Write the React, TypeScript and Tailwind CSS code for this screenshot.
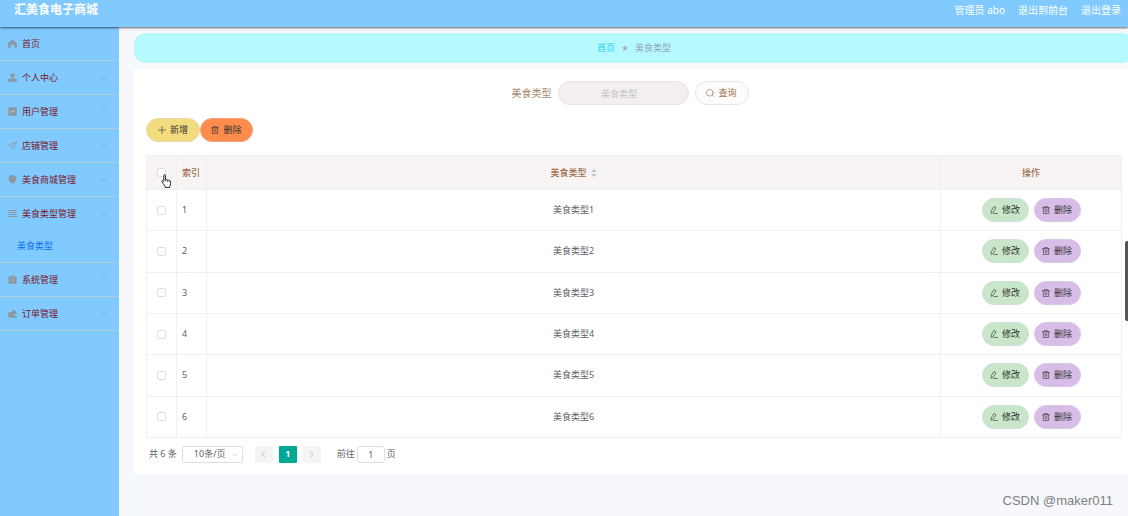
import type { ReactNode } from "react";

type IconProps = { className?: string };

function Filled({ children }: { children: ReactNode }) {
  return (
    <svg viewBox="0 0 18 18" fill="currentColor" className="size-[9px]" aria-hidden="true">
      {children}
    </svg>
  );
}

function Outline({ children, className = "size-2" }: { children: ReactNode; className?: string }) {
  return (
    <svg
      viewBox="0 0 18 18"
      fill="none"
      stroke="currentColor"
      strokeWidth="1.4"
      strokeLinecap="round"
      strokeLinejoin="round"
      className={className}
      aria-hidden="true"
    >
      {children}
    </svg>
  );
}

const HomeIcon = () => (
  <Filled>
    <path d="M9 1 16.800 7.500c.6.5.9 1 .9 1.600V16c0 .8-.6 1.500-1.300 1.500h-3.900V12c0-.7-.5-1.200-1.200-1.200H6.700c-.7 0-1.200.5-1.200 1.200v5.500h-4c-.7 0-1.300-.7-1.300-1.500V9.100c0-.6.3-1.100.9-1.600z" />
  </Filled>
);
const UserIcon = () => (
  <Filled>
    <circle cx="9" cy="5" r="4.700" />
    <path d="M.3 17.500v-3c0-2 1.500-3.500 3.500-3.500h10.400c2 0 3.500 1.500 3.500 3.500v3z" />
  </Filled>
);
const MarketingIcon = () => (
  <Filled>
    <rect x="0.500" y="0.500" width="17" height="17" rx="1.500" />
    <path d="M4 11 7.500 8l2.500 2L14 6" fill="none" stroke="#c3d3df" strokeWidth="1.500" />
  </Filled>
);
const PositionIcon = () => (
  <Outline className="size-[9px]">
    <path d="M17 1 1 7.500l6.500 3 3 6.500zM7.500 10.500 17 1" />
  </Outline>
);
const PinIcon = () => (
  <Filled>
    <path d="M9 0c4.600 0 8 3.300 8 7.600 0 3.900-3.500 7.400-8 10.400C4.500 15 1 11.500 1 7.600 1 3.300 4.400 0 9 0z" />
  </Filled>
);
const RowsIcon = () => (
  <Filled>
    <path d="M.5 2h17v2H.5zM.5 6h17v2H.5zM.5 10h17v2H.5zM.5 14h17v2H.5z" />
  </Filled>
);
const ClipboardIcon = () => (
  <Filled>
    <path d="M2 2.500H6V.5h6v2h4c.6 0 1 .4 1 1v13c0 .6-.4 1-1 1H2c-.6 0-1-.4-1-1v-13c0-.6.4-1 1-1z" />
    <path d="M6.500 8.500l5 5M11.500 8.500l-5 5M5.500 4.800h7" stroke="#a9c4d8" strokeWidth="1.200" fill="none" />
  </Filled>
);
const WalletIcon = () => (
  <Filled>
    <path d="M1.500 6.500H6L11.500 1l4 4v1.500h1c.5 0 1 .4 1 1V10h-4c-1 0-1.700.8-1.700 1.800s.7 1.700 1.700 1.700h4v3c0 .6-.5 1-1 1h-15c-.6 0-1-.4-1-1v-9c0-.6.4-1 1-1z" />
  </Filled>
);
const PlusIcon = () => (
  <Outline>
    <path d="M9 1v16M1 9h16" />
  </Outline>
);
const TrashIcon = () => (
  <Outline>
    <path d="M1 4h16M6 4V1h6v3M3 4v13h12V4M7.200 7.500v6M10.800 7.500v6" />
  </Outline>
);
const EditIcon = () => (
  <Outline>
    <path d="M9.500 1.500 13.500 4 7 14 2.500 16.500 3 11.500zM8 16.800h9" />
  </Outline>
);
const SearchIcon = () => (
  <Outline>
    <circle cx="8.500" cy="8.500" r="7.500" />
    <path d="M14 14 16.500 16.500" />
  </Outline>
);
const ChevronIcon = ({ className }: IconProps) => (
  <svg viewBox="0 0 12 8" fill="none" stroke="currentColor" strokeWidth="1.500" className={className} aria-hidden="true">
    <path d="M1 1.500 6 6.500 11 1.500" />
  </svg>
);

type MenuItem = { label: string; icon: ReactNode; expandable?: boolean; children?: string[] };

const menu: MenuItem[] = [
  { label: "首页", icon: <HomeIcon /> },
  { label: "个人中心", icon: <UserIcon />, expandable: true },
  { label: "用户管理", icon: <MarketingIcon />, expandable: true },
  { label: "店铺管理", icon: <PositionIcon />, expandable: true },
  { label: "美食商城管理", icon: <PinIcon />, expandable: true },
  { label: "美食类型管理", icon: <RowsIcon />, expandable: true, children: ["美食类型"] },
  { label: "系统管理", icon: <ClipboardIcon />, expandable: true },
  { label: "订单管理", icon: <WalletIcon />, expandable: true },
];

const rows = [1, 2, 3, 4, 5, 6];

const checkbox =
  "block mx-auto size-[9px] appearance-none rounded-[2px] border border-[#dcdfe6] bg-white checked:bg-[#00a896]";
const pill = "flex h-6 items-center justify-center gap-1 rounded-full border";

function Sidebar() {
  return (
    <nav className="w-[119px] shrink-0 bg-[#80caff]">
      <ul>
        {menu.map((item) => (
          <li key={item.label} className="border-b border-[#b2cde0]">
            <a href="#" className="flex h-[33px] items-center pr-3 pl-2 text-[#7c1427]">
              <span className="text-[#8c98a2]">{item.icon}</span>
              <span className="ml-[5px] grow">{item.label}</span>
              {item.expandable && (
                <ChevronIcon
                  className={item.children ? "h-1 w-1.5 rotate-180 text-[#7aa3c0]" : "h-1 w-1.5 text-[#7aa3c0]"}
                />
              )}
            </a>
            {item.children?.map((child) => (
              <a key={child} href="#" className="flex h-8 items-center pl-[17px] text-[#0b6cf0]">
                {child}
              </a>
            ))}
          </li>
        ))}
      </ul>
    </nav>
  );
}

function Pagination() {
  return (
    <div className="mt-[7px] flex h-[18px] items-center pl-[3px] text-[#606266]">
      <span>共 6 条</span>
      <div className="relative ml-[5px]">
        <select
          aria-label="每页条数"
          className="block h-[17px] w-[61px] appearance-none rounded-[2px] border border-[#dcdfe6] bg-white pl-[11px]"
        >
          <option>10条/页</option>
        </select>
        <ChevronIcon className="pointer-events-none absolute top-[7px] right-[5px] h-1 w-1.5 text-[#c0c4cc]" />
      </div>
      <div className="ml-3 flex gap-1.5">
        <button aria-label="上一页" className="flex h-[17px] w-[18px] items-center justify-center rounded-[1px] bg-[#f4f4f5] text-[#b4b8c0]">
          <ChevronIcon className="h-[5px] w-[7px] rotate-90" />
        </button>
        <button className="h-[17px] w-[18px] rounded-[1px] bg-[#00a896] font-bold text-white">1</button>
        <button aria-label="下一页" className="flex h-[17px] w-[18px] items-center justify-center rounded-[1px] bg-[#f4f4f5] text-[#b4b8c0]">
          <ChevronIcon className="h-[5px] w-[7px] -rotate-90" />
        </button>
      </div>
      <label className="ml-4 flex items-center gap-[2px]">
        前往
        <input
          defaultValue="1"
          className="h-[17px] w-7 rounded-[3px] border border-[#dcdfe6] text-center"
        />
        页
      </label>
    </div>
  );
}

function TypeTable() {
  return (
    <table className="mt-[13px] h-[283px] w-full table-fixed border-collapse border border-[#eef0f5] text-[#606266] [&_td]:border [&_td]:border-[#eef0f5] [&_th]:border [&_th]:border-[#eef0f5]">
      <colgroup>
        <col className="w-[30px]" />
        <col className="w-[30px]" />
        <col />
        <col className="w-[181px]" />
      </colgroup>
      <thead>
        <tr className="h-[34px] bg-[#f8f4f3] text-[#a0704f]">
          <th>
            <input type="checkbox" aria-label="全选" className={checkbox} />
          </th>
          <th className="pl-[5px] text-left font-medium">索引</th>
          <th className="font-medium">
            <span className="flex items-center justify-center gap-1">
              美食类型
              <svg viewBox="0 0 6 8" className="h-2 w-1.5" fill="#b9bfcb" aria-hidden="true">
                <path d="M3 0 5.800 3H.2zM3 8 .2 5h5.600z" />
              </svg>
            </span>
          </th>
          <th className="font-medium">操作</th>
        </tr>
      </thead>
      <tbody>
        {rows.map((n) => (
          <tr key={n}>
            <td>
              <input type="checkbox" aria-label={`选择第${n}行`} className={checkbox} />
            </td>
            <td className="pl-[5px]">{n}</td>
            <td className="text-center">美食类型{n}</td>
            <td>
              <div className="flex justify-center gap-[5px]">
                <button className={`${pill} w-[47px] border-[#cfe0d6] bg-[#c8e6c9] text-[#333333]`}>
                  <EditIcon />
                  修改
                </button>
                <button className={`${pill} w-[47px] border-[#d8c8e6] bg-[#d7bde8] text-[#333333]`}>
                  <TrashIcon />
                  删除
                </button>
              </div>
            </td>
          </tr>
        ))}
      </tbody>
    </table>
  );
}

export default function App() {
  return (
    <div className="relative flex min-h-screen flex-col overflow-hidden bg-[#f6f8fb] font-['Noto_Sans','Noto_Sans_CJK_SC',sans-serif] text-[9px] leading-3">
      <header className="z-10 flex h-[27px] items-center bg-[#80caff] pr-[7px] pb-2 pl-3.5 text-[10px] text-white shadow-[0_1px_2px_rgba(0,0,0,0.6)]">
        <h1 className="grow text-[12px] font-bold">汇美食电子商城</h1>
        <div className="flex gap-[13px]">
          <span>管理员 abo</span>
          <a href="#">退出到前台</a>
          <a href="#">退出登录</a>
        </div>
      </header>

      <div className="flex grow">
        <Sidebar />
        <main className="min-w-0 grow overflow-hidden pt-1.5 pl-[15px]">
          <div className="-mr-1.5 flex h-[30px] items-center justify-center gap-[7px] rounded-xl bg-[#b5f9ff]">
            <a href="#" className="text-[#22d3ee]">
              首页
            </a>
            <svg viewBox="0 0 12 12" className="size-1.5" fill="#a3b4bf" aria-hidden="true">
              <path d="M6 0 7.700 4.200 12 4.500 8.700 7.300 9.800 12 6 9.400 2.200 12 3.300 7.300 0 4.500 4.300 4.200z" />
            </svg>
            <span className="text-[#8fa5b8]">美食类型</span>
          </div>

          <section className="mt-1.5 bg-white pt-3 pr-1.5 pb-[11px] pl-3">
            <form className="flex items-center justify-center gap-1.5 pr-2">
              <label htmlFor="type" className="text-[10px] text-[#a58a70]">
                美食类型
              </label>
              <input
                id="type"
                placeholder="美食类型"
                className="h-6 w-[131px] rounded-full border border-[#e6e2e6] bg-[#f4eeee] pr-2 text-center placeholder:text-[#c0c4cc]"
              />
              <button type="button" className={`${pill} w-[54px] border-[#e4e7ed] bg-[#fcfcfc] text-[#a0704f]`}>
                <SearchIcon />
                查询
              </button>
            </form>

            <div className="mt-[13px] flex">
              <button className={`${pill} w-[54px] border-[#e4dca8] bg-[#f3dc7d] text-[#333333]`}>
                <PlusIcon />
                新增
              </button>
              <button className={`${pill} w-[53px] border-[#f3a27c] bg-[#ff8c4c] text-[#333333]`}>
                <TrashIcon />
                删除
              </button>
            </div>

            <TypeTable />
            <Pagination />
          </section>
        </main>
      </div>

      <div className="absolute top-[241px] right-0 h-20 w-[3px] rounded-l-[2px] bg-[#555555]" />
      <svg viewBox="0 0 20 26" className="absolute top-[174px] left-[161px] z-20 h-[14px] w-[11px]" aria-hidden="true">
        <path
          d="M5 2.500c0-2 3-2 3 0V11l1-.5c1-.8 2.500-.2 2.700.8 1-.7 2.500-.2 2.800.8 1.200-.6 3 0 3 1.700V18c0 2-1 3.500-1.500 5v2H7.500v-2C6 20.500 3.500 17.500 1.500 14.500c-1-1.800 1-3 2.200-1.800L5 14z"
          fill="#ffffff"
          stroke="#222222"
          strokeWidth="1.800"
        />
        <path d="M9 14v-3M12 15v-3M15 15v-2" stroke="#222222" strokeWidth="1.200" />
      </svg>
      <div className="absolute right-[15px] bottom-[7px] font-['Liberation_Sans',sans-serif] text-[13px] leading-4 text-[#7d7f82]">
        CSDN @maker011
      </div>
    </div>
  );
}
